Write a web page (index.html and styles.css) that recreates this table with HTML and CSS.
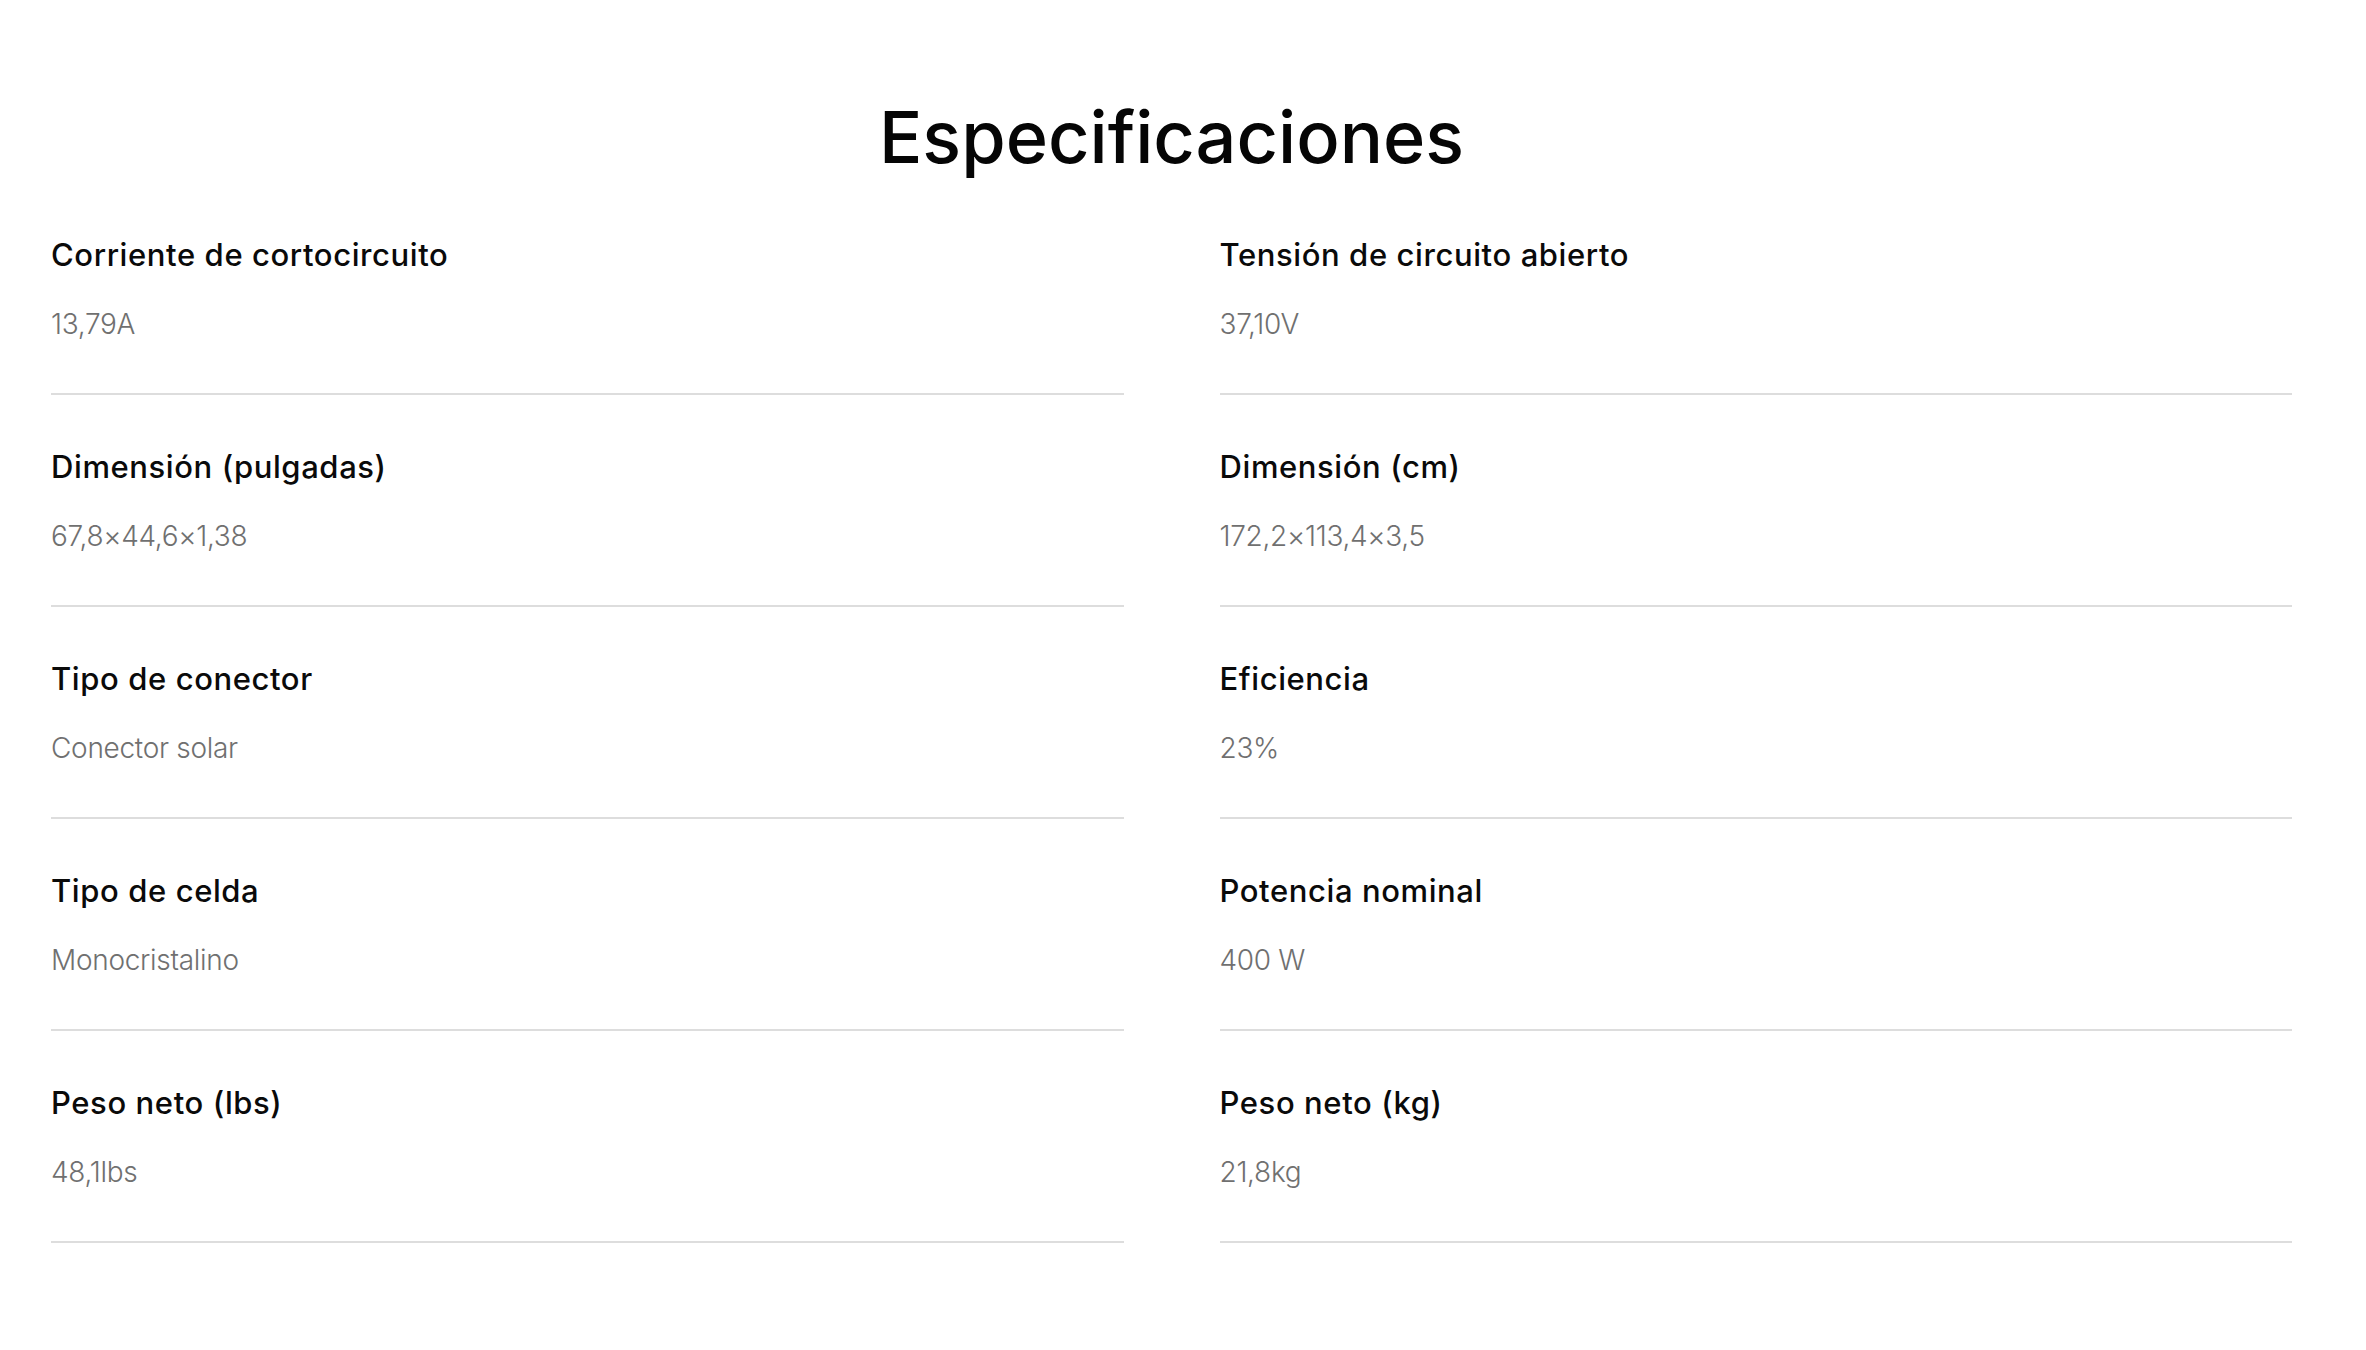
FILE: index.html
```html
<!DOCTYPE html>
<html lang="es">
<head>
<meta charset="utf-8">
<title>Especificaciones</title>
<link rel="stylesheet" href="styles.css">
</head>
<body>
<section class="specs">
  <h2 class="specs-title">Especificaciones</h2>
  <div class="specs-grid">
    <div class="spec"><div class="spec-label">Corriente de cortocircuito</div><div class="spec-value">13,79A</div></div>
    <div class="spec"><div class="spec-label">Tensión de circuito abierto</div><div class="spec-value">37,10V</div></div>
    <div class="spec"><div class="spec-label">Dimensión (pulgadas)</div><div class="spec-value">67,8×44,6×1,38</div></div>
    <div class="spec"><div class="spec-label">Dimensión (cm)</div><div class="spec-value">172,2×113,4×3,5</div></div>
    <div class="spec"><div class="spec-label">Tipo de conector</div><div class="spec-value">Conector solar</div></div>
    <div class="spec"><div class="spec-label">Eficiencia</div><div class="spec-value">23%</div></div>
    <div class="spec"><div class="spec-label">Tipo de celda</div><div class="spec-value">Monocristalino</div></div>
    <div class="spec"><div class="spec-label">Potencia nominal</div><div class="spec-value">400 W</div></div>
    <div class="spec"><div class="spec-label">Peso neto (lbs)</div><div class="spec-value">48,1lbs</div></div>
    <div class="spec"><div class="spec-label">Peso neto (kg)</div><div class="spec-value">21,8kg</div></div>
  </div>
</section>
</body>
</html>
```
FILE: styles.css
```css
html, body {
  margin: 0;
  padding: 0;
  background: #ffffff;
}

body {
  font-family: Inter, "Liberation Sans", Arial, sans-serif;
  color: #000000;
}

.specs {
  padding: 94px 74px 0 51px;
}

.specs-title {
  margin: 0 0 3px;
  text-align: center;
  font-size: 72px;
  line-height: 86px;
  font-weight: 500;
  color: #050505;
}

.specs-grid {
  display: grid;
  grid-template-columns: 1fr 1fr;
  column-gap: 96px;
}

.spec {
  padding: 52px 0 51px;
  border-bottom: 2px solid #dddddd;
}

.spec-label {
  font-size: 31px;
  line-height: 39px;
  font-weight: 500;
  letter-spacing: 0.6px;
  color: #0a0a0a;
}

.spec-value {
  margin-top: 32px;
  font-size: 28px;
  line-height: 36px;
  font-weight: 300;
  letter-spacing: -0.3px;
  color: #707070;
}
```
